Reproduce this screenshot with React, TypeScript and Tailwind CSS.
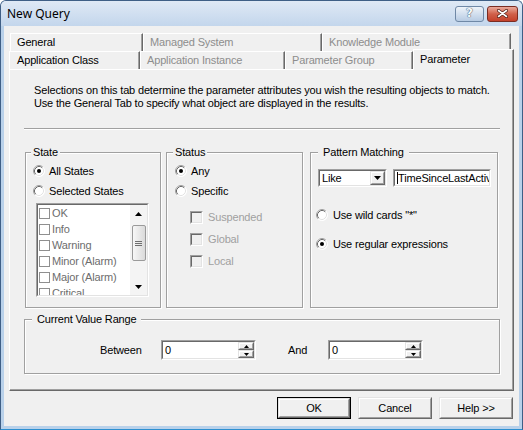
import type { ReactNode } from 'react';

function Radio({ checked = false }: { checked?: boolean }) {
  return (
    <svg width="12" height="12" viewBox="0 0 12 12" className="shrink-0">
      <circle cx="6" cy="6" r="5.5" fill="#fff" />
      <path d="M2.11 9.89A5.5 5.5 0 0 1 9.89 2.11" fill="none" stroke="#a0a0a0" />
      <path d="M9.89 2.11A5.5 5.5 0 0 1 2.11 9.89" fill="none" stroke="#ffffff" />
      <path d="M2.82 9.18A4.5 4.5 0 0 1 9.18 2.82" fill="none" stroke="#696969" />
      <path d="M9.18 2.82A4.5 4.5 0 0 1 2.82 9.18" fill="none" stroke="#e3e3e3" />
      {checked && <circle cx="6" cy="6" r="2" fill="#000" />}
    </svg>
  );
}

function Check3D() {
  return (
    <span className="block h-[13px] w-[13px] shrink-0 border border-t-[#a0a0a0] border-l-[#a0a0a0] border-r-white border-b-white">
      <span className="block h-full w-full border border-t-[#696969] border-l-[#696969] border-r-[#e3e3e3] border-b-[#e3e3e3] bg-[#f0f0f0]" />
    </span>
  );
}

function Sunken({ className = '', children }: { className?: string; children?: ReactNode }) {
  return (
    <div className={`border border-t-[#a0a0a0] border-l-[#a0a0a0] border-r-white border-b-white ${className}`}>
      <div className="flex h-full w-full border border-t-[#696969] border-l-[#696969] border-r-[#e3e3e3] border-b-[#e3e3e3] bg-white">
        {children}
      </div>
    </div>
  );
}

function Raised({ className = '', children }: { className?: string; children?: ReactNode }) {
  return (
    <div className={`border border-t-[#e3e3e3] border-l-[#e3e3e3] border-r-[#696969] border-b-[#696969] ${className}`}>
      <div className="flex h-full w-full items-center justify-center border border-t-white border-l-white border-r-[#a0a0a0] border-b-[#a0a0a0] bg-[#f0f0f0]">
        {children}
      </div>
    </div>
  );
}

function Down({ w = 7, h = 4 }: { w?: number; h?: number }) {
  return (
    <svg width={w} height={h} viewBox={`0 0 ${w} ${h}`}>
      <path d={`M0 0H${w}L${w / 2} ${h}Z`} fill="#000" />
    </svg>
  );
}

function Up({ w = 7, h = 4 }: { w?: number; h?: number }) {
  return (
    <svg width={w} height={h} viewBox={`0 0 ${w} ${h}`}>
      <path d={`M0 ${h}H${w}L${w / 2} 0Z`} fill="#000" />
    </svg>
  );
}

function Tab({ label, className = '', disabled = false }: { label: string; className?: string; disabled?: boolean }) {
  return (
    <div
      className={`flex items-center border-t border-l border-r border-t-white border-l-white border-r-[#696969] pl-[6px] shadow-[inset_-1px_0_0_#a0a0a0] ${disabled ? 'text-[#8d8d8d]' : 'text-black'} ${className}`}
    >
      {label}
    </div>
  );
}

function Group({ label, className = '', legend = '', children }: { label: string; className?: string; legend?: string; children?: ReactNode }) {
  return (
    <fieldset className={`border border-[#a0a0a0] shadow-[1px_1px_0_#fff,inset_1px_1px_0_#fff] ${className}`}>
      <legend className={`bg-[#f0f0f0] leading-[13px] ${legend}`}>{label}</legend>
      {children}
    </fieldset>
  );
}

function Spin() {
  return (
    <Sunken className="h-[20px] w-[95px]">
      <span className="flex-1 pl-[2px] leading-[16px]">0</span>
      <div className="flex w-[16px] flex-col">
        <Raised className="h-[9px] w-full">
          <Up w={5} h={3} />
        </Raised>
        <Raised className="h-[9px] w-full">
          <Down w={5} h={3} />
        </Raised>
      </div>
    </Sunken>
  );
}

const states = ['OK', 'Info', 'Warning', 'Minor (Alarm)', 'Major (Alarm)', 'Critical'];

export default function App() {
  return (
    <div className="flex h-[430px] w-[523px] flex-col rounded-t-[6px] border border-[#3f5f86] border-b-[#2d8fd0] bg-[#b9d1ea] font-['Liberation_Sans',Arial,sans-serif] text-[11px] leading-[13px] tracking-[-0.16px] text-black">
      {/* Title bar */}
      <div className="flex h-[25px] items-center rounded-t-[5px] bg-gradient-to-b from-[#dfe9f5] to-[#c3d6ec] pl-[6px] pr-[4px]">
        <span className="flex-1 font-['Noto_Sans',sans-serif] text-[12px] tracking-normal text-black">New Query</span>
        <div className="flex items-center gap-[3px]">
          <div className="flex h-[16px] w-[29px] items-center justify-center rounded-[3px] border border-[#6f88a6] bg-gradient-to-b from-[#eef3f9] to-[#b7cbe3] font-['DejaVu_Sans',sans-serif] text-[12px] font-bold text-[#f7f9fc] [text-shadow:0_0_1px_#33485f,0_0_1px_#33485f]">
            ?
          </div>
          <div className="flex h-[16px] w-[31px] items-center justify-center rounded-[3px] border border-[#7a2c22] bg-gradient-to-b from-[#e9a99b] via-[#d0604a] to-[#c4402a]">
            <svg width="11" height="9" viewBox="0 0 11 9">
              <path d="M1.5 1.5L9.5 7.5M9.5 1.5L1.5 7.5" stroke="#4a1a12" strokeWidth="3" strokeLinecap="round" />
              <path d="M1.5 1.5L9.5 7.5M9.5 1.5L1.5 7.5" stroke="#fff" strokeWidth="1.6" strokeLinecap="round" />
            </svg>
          </div>
        </div>
      </div>

      {/* Client */}
      <div className="mx-[3px] mb-[3px] flex flex-1 flex-col bg-[#f0f0f0] px-[5px] pt-[7px]">
        {/* Tabs */}
        <div className="ml-[1px] flex h-[18px] w-[501px]">
          <Tab label="General" className="w-[133px]" />
          <Tab label="Managed System" className="w-[179px]" disabled />
          <Tab label="Knowledge Module" className="w-[189px]" disabled />
        </div>
        <div className="flex h-[18px] w-[505px]">
          <Tab label="Application Class" className="w-[131px] pl-[7px]" />
          <Tab label="Application Instance" className="w-[145px]" disabled />
          <Tab label="Parameter Group" className="w-[128px]" disabled />
          <Tab label="Parameter" className="relative z-10 mt-[-2px] h-[21px] w-[101px] bg-[#f0f0f0] pb-[1px]" />
        </div>

        {/* Panel */}
        <div className="flex h-[322px] w-[505px] flex-col border-t border-l border-r border-b border-t-white border-l-white border-r-[#696969] border-b-[#696969] pl-[14px] pr-[13px] pt-[14px] shadow-[inset_-1px_-1px_0_#a0a0a0]">
          <p className="ml-[10px] whitespace-nowrap">
            Selections on this tab determine the parameter attributes you wish the resulting objects to match.
            <br />
            Use the General Tab to specify what object are displayed in the results.
          </p>
          <div className="mt-[18px] h-[2px] w-[476px] border-t border-b border-t-[#a0a0a0] border-b-white" />

          <div className="mt-[16px] flex">
            {/* State */}
            <Group label="State" className="ml-[1px] h-[162px] w-[136px]" legend="ml-[5px] px-[2px]">
              <div className="flex flex-col pt-[2px]">
                <div className="flex h-[20px] items-center gap-[4px] pl-[7px]">
                  <Radio checked />
                  <span>All States</span>
                </div>
                <div className="flex h-[20px] items-center gap-[4px] pl-[7px]">
                  <Radio />
                  <span>Selected States</span>
                </div>
                <Sunken className="ml-[10px] mt-[2px] h-[94px] w-[113px]">
                  <div className="flex flex-1 flex-col overflow-hidden text-[#6d6d6d]">
                    {states.map((s) => (
                      <div key={s} className="flex h-[16px] shrink-0 items-center gap-[2px] pl-[1px]">
                        <span className="h-[11px] w-[11px] shrink-0 border border-[#8f8f8f] bg-white" />
                        <span>{s}</span>
                      </div>
                    ))}
                  </div>
                  <div className="flex w-[17px] flex-col items-center bg-[#f4f4f4]">
                    <div className="flex h-[17px] w-full items-center justify-center">
                      <Up />
                    </div>
                    <div className="mt-[3px] flex h-[36px] w-[14px] items-center justify-center rounded-[2px] border border-[#9a9a9a] bg-gradient-to-r from-[#f7f7f7] to-[#dadada]">
                      <svg width="7" height="7" viewBox="0 0 7 7">
                        <path d="M0 1.5H7M0 3.5H7M0 5.5H7" stroke="#6e6e6e" />
                      </svg>
                    </div>
                    <div className="flex-1" />
                    <div className="flex h-[17px] w-full items-center justify-center">
                      <Down />
                    </div>
                  </div>
                </Sunken>
              </div>
            </Group>

            {/* Status */}
            <Group label="Status" className="ml-[5px] h-[162px] w-[137px]" legend="ml-[6px] px-[2px]">
              <div className="flex flex-col pt-[2px]">
                <div className="flex h-[20px] items-center gap-[4px] pl-[8px]">
                  <Radio checked />
                  <span>Any</span>
                </div>
                <div className="flex h-[20px] items-center gap-[4px] pl-[8px]">
                  <Radio />
                  <span>Specific</span>
                </div>
                <div className="mt-[5px] flex flex-col text-[#a0a0a0]">
                  {['Suspended', 'Global', 'Local'].map((s) => (
                    <div key={s} className="flex h-[22px] items-center gap-[5px] pl-[23px]">
                      <Check3D />
                      <span>{s}</span>
                    </div>
                  ))}
                </div>
              </div>
            </Group>

            {/* Pattern Matching */}
            <Group label="Pattern Matching" className="ml-[7px] h-[162px] w-[188px]" legend="ml-[7px] px-[5px]">
              <div className="flex flex-col pt-[10px]">
                <div className="flex gap-[6px] pl-[7px]">
                  <Sunken className="h-[18px] w-[69px]">
                    <span className="flex-1 pl-[2px] leading-[14px]">Like</span>
                    <Raised className="h-full w-[15px]">
                      <Down />
                    </Raised>
                  </Sunken>
                  <Sunken className="h-[18px] w-[98px]">
                    <span className="overflow-hidden whitespace-nowrap pl-[2px] leading-[14px]">
                      <span className="border-l border-black">TimeSinceLastActivity</span>
                    </span>
                  </Sunken>
                </div>
                <div className="mt-[18px] flex h-[20px] items-center gap-[5px] pl-[5px]">
                  <Radio />
                  <span>Use wild cards "*"</span>
                </div>
                <div className="mt-[9px] flex h-[20px] items-center gap-[5px] pl-[5px]">
                  <Radio checked />
                  <span>Use regular expressions</span>
                </div>
              </div>
            </Group>
          </div>

          {/* Current Value Range */}
          <Group label="Current Value Range" className="mt-[5px] h-[61px] w-[476px]" legend="ml-[7px] px-[5px]">
            <div className="mt-[14px] flex h-[20px] items-center pl-[75px]">
              <span className="w-[61px]">Between</span>
              <Spin />
              <span className="ml-[32px] w-[40px]">And</span>
              <Spin />
            </div>
          </Group>
        </div>

        {/* Buttons */}
        <div className="mr-[1px] mt-[6px] flex justify-end gap-[7px]">
          <div className="h-[22px] w-[74px] border border-black">
            <Raised className="h-full w-full">OK</Raised>
          </div>
          <Raised className="h-[22px] w-[74px]">Cancel</Raised>
          <Raised className="h-[22px] w-[74px]">Help &gt;&gt;</Raised>
        </div>
      </div>
    </div>
  );
}
